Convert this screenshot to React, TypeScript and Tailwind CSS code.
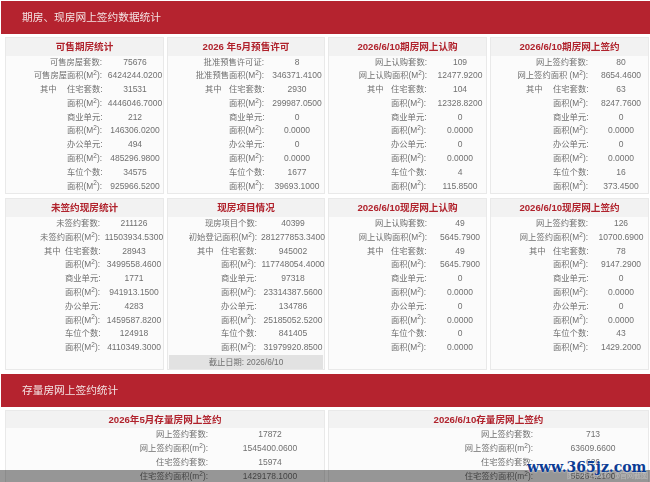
const FONT = "font-['Liberation_Sans','Noto_Sans_CJK_SC',sans-serif]";

type Item = { label: string; m2?: boolean; value: string; first?: boolean };

const rowsOf = (labels: [string, string], v: string[]): Item[] => [
  { label: labels[0], value: v[0] },
  { label: labels[1], m2: true, value: v[1] },
  { label: "住宅套数", value: v[2], first: true },
  { label: "面积", m2: true, value: v[3] },
  { label: "商业单元", value: v[4] },
  { label: "面积", m2: true, value: v[5] },
  { label: "办公单元", value: v[6] },
  { label: "面积", m2: true, value: v[7] },
  { label: "车位个数", value: v[8] },
  { label: "面积", m2: true, value: v[9] },
];

function Label({ item }: { item: Item }) {
  return (
    <>
      {item.label}
      {item.m2 && (
        <>
          (M<sup className="text-[6.5px] leading-none">2</sup>)
        </>
      )}
      :
    </>
  );
}

function Card({
  title,
  cols,
  qz,
  rows,
  footer,
}: {
  title: string;
  cols: string;
  qz: string;
  rows: Item[];
  footer?: string;
}) {
  return (
    <div className="flex flex-col border border-[#e9e9e9] bg-[#fbfbfb]">
      <div className="h-[17.5px] bg-[#f2f2f2] text-center text-[9.6px] font-bold leading-[17.5px] text-[#b0222c]">
        {title}
      </div>
      <div className={`grid auto-rows-[13.8px] ${cols} text-[8.3px] leading-[13.8px] text-[#707070]`}>
        {rows.map((r, i) =>
          i < 2 ? (
            <div key={i} className="contents">
              <div className="col-span-2 whitespace-nowrap text-right">
                <Label item={r} />
              </div>
              <div className="whitespace-nowrap text-center text-[8.5px]">{r.value}</div>
            </div>
          ) : (
            <div key={i} className="contents">
              <div className={`whitespace-nowrap ${qz}`}>{r.first ? "其中" : ""}</div>
              <div className="whitespace-nowrap">
                <Label item={r} />
              </div>
              <div className="whitespace-nowrap text-center text-[8.5px]">{r.value}</div>
            </div>
          ),
        )}
      </div>
      {footer && (
        <div className="mx-px mt-auto h-[14px] bg-[#e2e2e2] text-center text-[8.3px] leading-[14px] text-[#707070]">
          {footer}
        </div>
      )}
    </div>
  );
}

function Banner({ title }: { title: string }) {
  return (
    <div className="ml-px h-[33px] bg-[#b5232f] pl-[21px] text-[10.7px] leading-[33px] text-[#f4e4e4]">
      {title}
    </div>
  );
}

function Simple({
  title,
  cols,
  rows,
}: {
  title: string;
  cols: string;
  rows: [string, string][];
}) {
  return (
    <div className="border border-[#e9e9e9] bg-[#fbfbfb]">
      <div className="h-[17.5px] bg-[#f2f2f2] text-center text-[9.6px] font-bold leading-[17.5px] text-[#b0222c]">
        {title}
      </div>
      <div className={`grid auto-rows-[13.8px] ${cols} text-[8.3px] leading-[13.8px] text-[#707070]`}>
        {rows.map(([l, v], i) => (
          <div key={i} className="contents">
            <div className="whitespace-nowrap text-right">
              {l.endsWith("积") ? (
                <>
                  {l}(m<sup className="text-[6.5px] leading-none">2</sup>):
                </>
              ) : (
                `${l}:`
              )}
            </div>
            <div className="whitespace-nowrap text-center text-[8.5px]">{v}</div>
          </div>
        ))}
      </div>
    </div>
  );
}

export default function App() {
  return (
    <div className={`relative h-[482px] w-[650px] overflow-hidden bg-white ${FONT}`}>
      <div className="blur-[0.45px] pt-px">
        <Banner title="期房、现房网上签约数据统计" />

        <div className="ml-[5px] mt-[3px] grid grid-cols-[159px_158px_159px_159px] gap-x-[3px] gap-y-[4px]">
          <Card
            title="可售期房统计"
            cols="grid-cols-[61px_35px_66px]"
            qz="pl-[34px]"
            rows={rowsOf(
              ["可售房屋套数", "可售房屋面积"],
              ["75676", "6424244.0200", "31531", "4446046.7000", "212", "146306.0200", "494", "485296.9800", "34575", "925966.5200"],
            )}
          />
          <Card
            title="2026 年5月预售许可"
            cols="grid-cols-[61px_35px_66px]"
            qz="pl-[37px]"
            rows={rowsOf(
              ["批准预售许可证", "批准预售面积"],
              ["8", "346371.4100", "2930", "299987.0500", "0", "0.0000", "0", "0.0000", "1677", "39693.1000"],
            )}
          />
          <Card
            title="2026/6/10期房网上认购"
            cols="grid-cols-[62px_36px_66px]"
            qz="pl-[38px]"
            rows={rowsOf(
              ["网上认购套数", "网上认购面积"],
              ["109", "12477.9200", "104", "12328.8200", "0", "0.0000", "0", "0.0000", "4", "115.8500"],
            )}
          />
          <Card
            title="2026/6/10期房网上签约"
            cols="grid-cols-[62px_35px_66px]"
            qz="pl-[35px]"
            rows={rowsOf(
              ["网上签约套数", "网上签约面积 "],
              ["80", "8654.4600", "63", "8247.7600", "0", "0.0000", "0", "0.0000", "16", "373.4500"],
            )}
          />

          <Card
            title="未签约现房统计"
            cols="grid-cols-[59px_35px_68px]"
            qz="pl-[38px]"
            rows={rowsOf(
              ["未签约套数", "未签约面积"],
              ["211126", "11503934.5300", "28943", "3499558.4600", "1771", "941913.1500", "4283", "1459587.8200", "124918", "4110349.3000"],
            )}
          />
          <Card
            title="现房项目情况"
            cols="grid-cols-[53px_36px_72px]"
            qz="pl-[29px]"
            footer="截止日期:  2026/6/10"
            rows={rowsOf(
              ["现房项目个数", "初始登记面积"],
              ["40399", "281277853.3400", "945002", "117748054.4000", "97318", "23314387.5600", "134786", "25185052.5200", "841405", "31979920.8500"],
            )}
          />
          <Card
            title="2026/6/10现房网上认购"
            cols="grid-cols-[62px_36px_66px]"
            qz="pl-[38px]"
            rows={rowsOf(
              ["网上认购套数", "网上认购面积"],
              ["49", "5645.7900", "49", "5645.7900", "0", "0.0000", "0", "0.0000", "0", "0.0000"],
            )}
          />
          <Card
            title="2026/6/10现房网上签约"
            cols="grid-cols-[62px_35px_66px]"
            qz="pl-[38px]"
            rows={rowsOf(
              ["网上签约套数", "网上签约面积"],
              ["126", "10700.6900", "78", "9147.2900", "0", "0.0000", "0", "0.0000", "43", "1429.2000"],
            )}
          />
        </div>

        <div className="mt-[4px]">
          <Banner title="存量房网上签约统计" />
        </div>

        <div className="ml-[5px] mt-[3px] grid grid-cols-[320px_321px] gap-x-[3px]">
          <Simple
            title="2026年5月存量房网上签约"
            cols="grid-cols-[202px_124px]"
            rows={[
              ["网上签约套数", "17872"],
              ["网上签约面积", "1545400.0600"],
              ["住宅签约套数", "15974"],
              ["住宅签约面积", "1429178.1000"],
            ]}
          />
          <Simple
            title="2026/6/10存量房网上签约"
            cols="grid-cols-[204px_120px]"
            rows={[
              ["网上签约套数", "713"],
              ["网上签约面积", "63609.6600"],
              ["住宅签约套数", "626"],
              ["住宅签约面积", "56264.2100"],
            ]}
          />
        </div>
      </div>

      <div className="absolute inset-x-0 bottom-0 h-[12px] bg-black/40 pr-[2px] text-right text-[7px] leading-[12px] text-white/35 blur-[0.45px]">
        图片来源:网络 @官网截图
      </div>
      <div className="absolute left-[527px] top-[459px] whitespace-nowrap font-['DejaVu_Serif',serif] text-[14px] font-bold leading-[16px] text-[#0c3c94] [text-shadow:0_0_2px_white]">
        www.365jz.com
      </div>
    </div>
  );
}
